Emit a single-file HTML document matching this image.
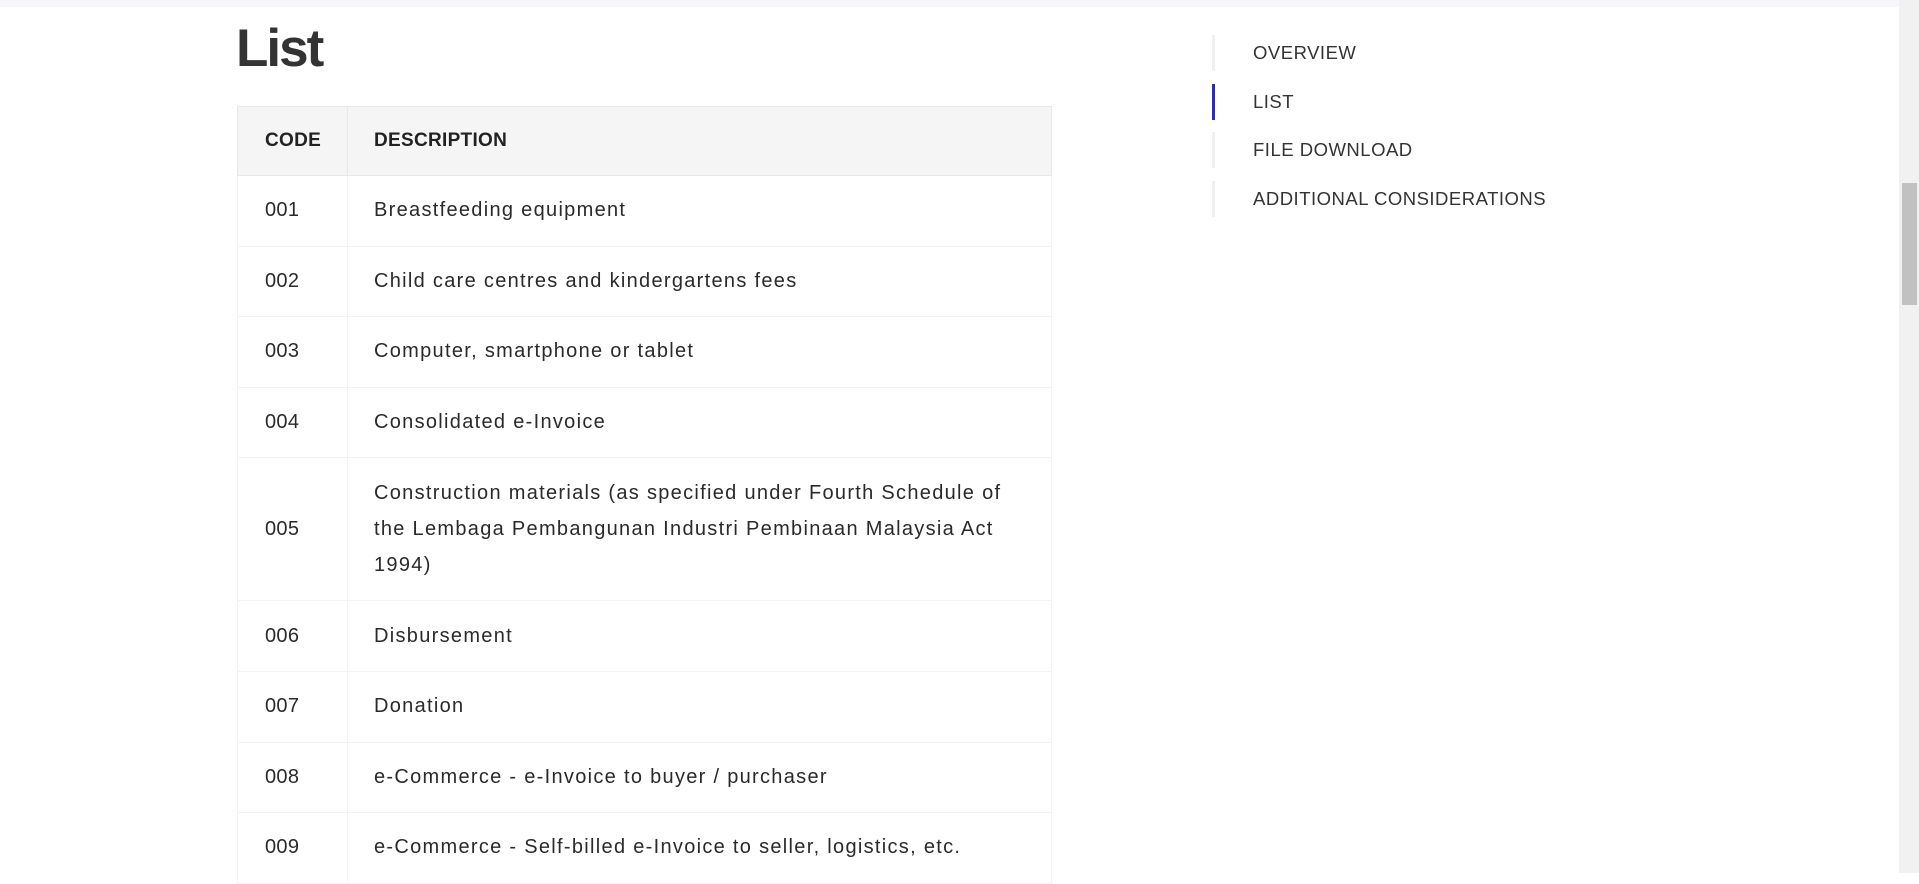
<!DOCTYPE html>
<html><head><meta charset="utf-8"><style>
*{margin:0;padding:0;box-sizing:border-box}
body{width:1919px;height:873px;overflow:hidden;background:#fff;font-family:"Liberation Sans",sans-serif;color:#333;position:relative}
.top{position:absolute;left:0;top:0;width:1899px;height:7px;background:#f7f7fb}
h1{position:absolute;left:236px;top:18px;font-size:53px;font-weight:bold;color:#333;letter-spacing:-2px}
table{position:absolute;left:237px;top:106px;width:815px;border-collapse:collapse}
td,th{border:1px solid #f3f3f3;text-align:left;vertical-align:middle;font-size:20px;letter-spacing:1.3px}
th{background:#f5f5f5;height:69px;font-size:19px;font-weight:bold;color:#222;border-color:#e8e8e8;letter-spacing:0.3px}
td{height:70.6px;color:#2a2a2a}
td:first-child{letter-spacing:0.3px}
td:first-child,th:first-child{width:110px;padding-left:27px}
td:last-child,th:last-child{padding-left:26px;padding-right:30px}
td.multi{height:143px;line-height:36px}
.nav{position:absolute;left:1212px;top:35px}
.nav div{height:36px;border-left:3px solid #f0f0f0;padding-left:38px;font-size:18.5px;line-height:36px;margin-bottom:12.5px;color:#333;letter-spacing:0.5px}
.nav div.a{border-left-color:#2a2ac8}
.sb{position:absolute;left:1899px;top:0;width:20px;height:873px;background:#f1f1f1}
.th{position:absolute;left:1902px;top:183px;width:15px;height:122px;background:#c1c1c1}
</style></head><body>
<div class="top"></div>
<h1>List</h1>
<table>
<tr><th>CODE</th><th>DESCRIPTION</th></tr>
<tr><td>001</td><td>Breastfeeding equipment</td></tr>
<tr><td>002</td><td>Child care centres and kindergartens fees</td></tr>
<tr><td>003</td><td>Computer, smartphone or tablet</td></tr>
<tr><td>004</td><td>Consolidated e-Invoice</td></tr>
<tr><td>005</td><td class="multi">Construction materials (as specified under Fourth Schedule of<br>the Lembaga Pembangunan Industri Pembinaan Malaysia Act<br>1994)</td></tr>
<tr><td>006</td><td>Disbursement</td></tr>
<tr><td>007</td><td>Donation</td></tr>
<tr><td>008</td><td>e-Commerce - e-Invoice to buyer / purchaser</td></tr>
<tr><td>009</td><td>e-Commerce - Self-billed e-Invoice to seller, logistics, etc.</td></tr>
</table>
<div class="nav">
<div>OVERVIEW</div>
<div class="a">LIST</div>
<div>FILE DOWNLOAD</div>
<div>ADDITIONAL CONSIDERATIONS</div>
</div>
<div class="sb"></div><div class="th"></div>
</body></html>
